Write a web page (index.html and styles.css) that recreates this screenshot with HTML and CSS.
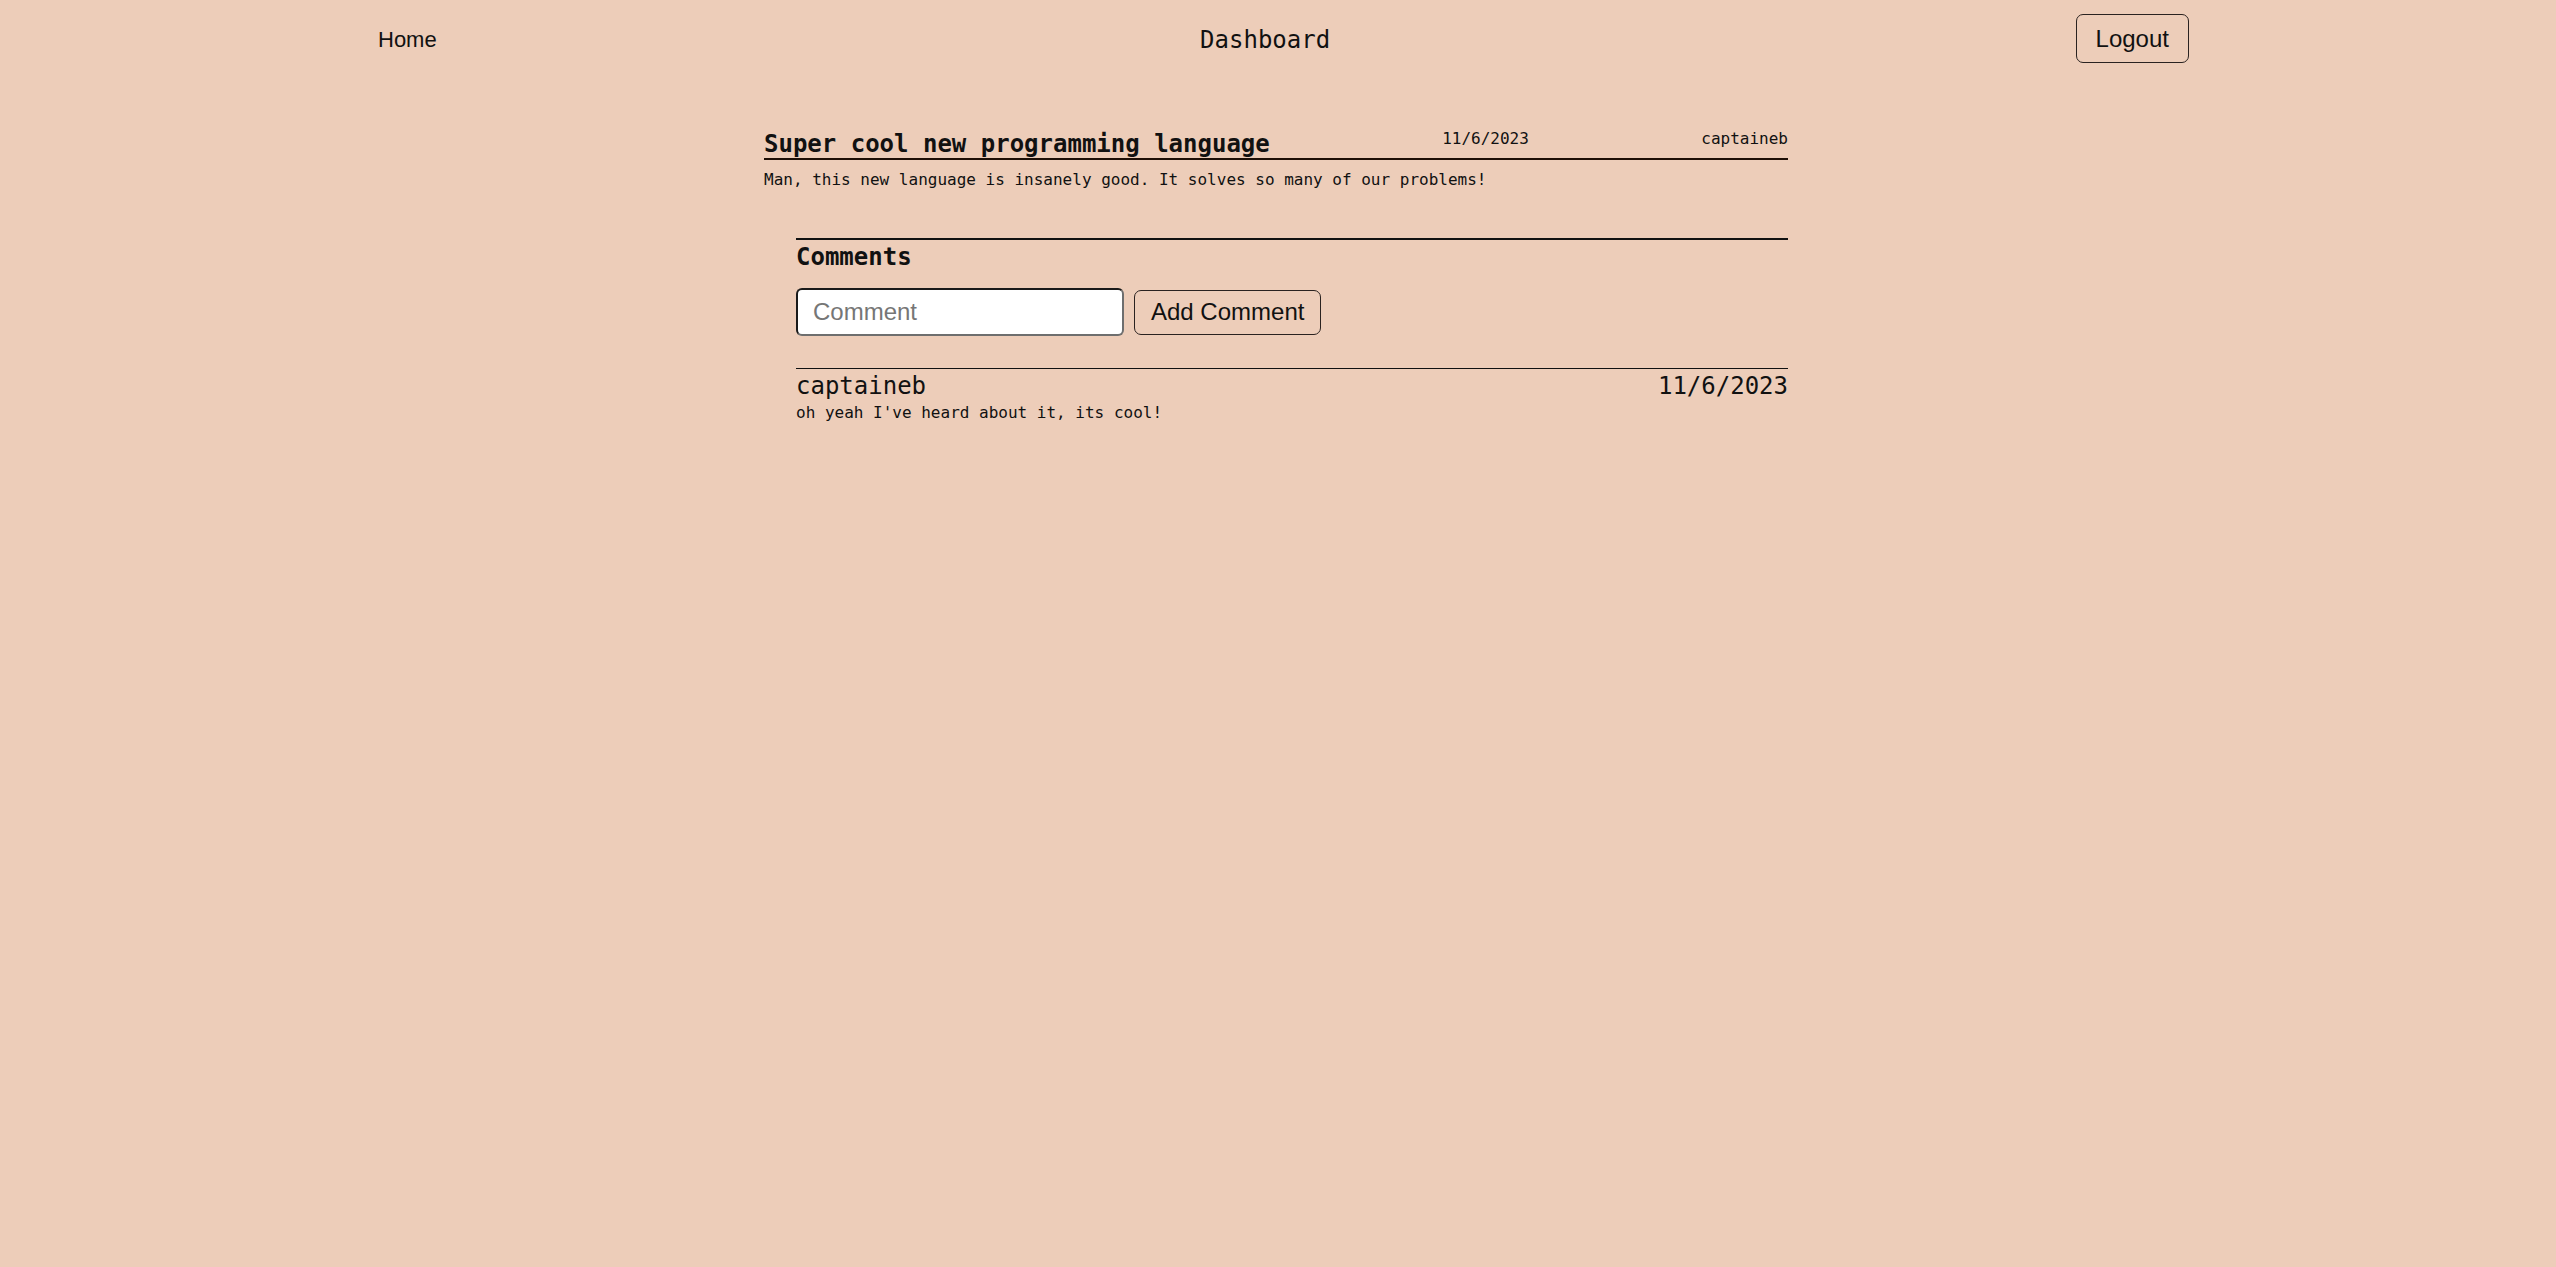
FILE: index.html
```html
<!DOCTYPE html>
<html lang="en">
<head>
<meta charset="utf-8">
<title>Dashboard</title>
<link rel="stylesheet" href="styles.css">
</head>
<body>
<header class="topbar">
  <a class="home-link" href="#">Home</a>
  <h1 class="page-title">Dashboard</h1>
  <button class="btn btn-logout" type="button">Logout</button>
</header>
<main class="post">
  <div class="post-head">
    <h2 class="post-title">Super cool new programming language</h2>
    <span class="post-meta">11/6/2023</span>
    <span class="post-meta">captaineb</span>
  </div>
  <p class="post-body">Man, this new language is insanely good. It solves so many of our problems!</p>
  <section class="comments">
    <h3 class="comments-title">Comments</h3>
    <form class="comment-form">
      <input class="comment-input" type="text" placeholder="Comment">
      <button class="btn btn-add" type="button">Add Comment</button>
    </form>
    <div class="comment">
      <div class="comment-head">
        <span class="comment-author">captaineb</span>
        <span class="comment-date">11/6/2023</span>
      </div>
      <p class="comment-text">oh yeah I've heard about it, its cool!</p>
    </div>
  </section>
</main>
</body>
</html>
```
FILE: styles.css
```css
html, body {
  margin: 0;
  padding: 0;
}
body {
  background: #edcdb9;
  color: #111;
  font-family: "DejaVu Sans Mono", "Liberation Mono", monospace;
  min-height: 100vh;
}
.topbar {
  display: flex;
  align-items: center;
  justify-content: space-between;
  padding: 14px 367px 14px 378px;
}
.home-link {
  font-family: "Liberation Sans", Arial, sans-serif;
  font-size: 22px;
  color: #111;
  text-decoration: none;
  margin-top: 3px;
}
.page-title {
  margin: 3px 0 0 18px;
  font-size: 24px;
  font-weight: normal;
  line-height: 28px;
}
.btn {
  font-family: "Liberation Sans", Arial, sans-serif;
  background: transparent;
  color: #111;
  border: 1px solid #2a2220;
  border-radius: 7px;
  cursor: pointer;
}
.btn-logout {
  font-size: 24px;
  height: 49px;
  padding: 0 19px;
}
.post {
  width: 1024px;
  margin: 53px auto 0;
  position: relative;
  left: -2px;
}
.post-head {
  display: flex;
  justify-content: space-between;
  align-items: flex-start;
  border-bottom: 2px solid #1e0f06;
}
.post-title {
  margin: 0;
  font-size: 24px;
  line-height: 28px;
  font-weight: bold;
}
.post-meta {
  font-size: 16px;
  line-height: 17px;
}
.post-body {
  margin: 10px 0 0;
  font-size: 16px;
  line-height: 20px;
}
.comments {
  margin: 48px 0 0 32px;
  border-top: 2px solid #111;
}
.comments-title {
  margin: 3px 0 0;
  font-size: 24px;
  line-height: 28px;
  font-weight: bold;
}
.comment-form {
  display: flex;
  align-items: center;
  gap: 10px;
  margin-top: 17px;
}
.comment-input {
  box-sizing: border-box;
  width: 328px;
  height: 48px;
  padding: 0 15px;
  background: #fff;
  border: 2px solid;
  border-color: #1a1a1a #6e6e6e #6e6e6e #1a1a1a;
  border-radius: 6px;
  font-family: "Liberation Sans", Arial, sans-serif;
  font-size: 24px;
  color: #111;
}
.comment-input::placeholder {
  color: #767676;
}
.btn-add {
  font-size: 24px;
  height: 45px;
  padding: 0 16px;
}
.comment {
  margin-top: 32px;
  border-top: 1px solid #111;
}
.comment-head {
  display: flex;
  justify-content: space-between;
  padding-top: 3px;
  font-size: 24px;
  line-height: 28px;
}
.comment-text {
  margin: 3px 0 0;
  font-size: 16px;
  line-height: 20px;
}
```
